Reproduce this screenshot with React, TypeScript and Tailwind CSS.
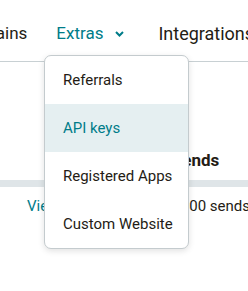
import React from 'react';

const menuItems = ['Referrals', 'API keys', 'Registered Apps', 'Custom Website'];

const App = () => {
  const active = 'API keys';

  return (
    <div className="relative w-[248px] h-[291px] overflow-hidden bg-white text-[#241c15]" style={{ fontFamily: 'Roboto, "Liberation Sans", sans-serif' }}>
      {/* top nav */}
      <div className="flex items-center h-[62px] pt-[6px] border-b border-[#c8d0d3] whitespace-nowrap text-[17px]">
        <span className="-ml-[40px]">Domains</span>
        <span className="ml-[29px] flex items-center text-[#007c89]">
          Extras
          <svg className="ml-[12px]" width="9" height="6" viewBox="0 0 9 6" fill="none">
            <path d="M1 1l3.5 3.5L8 1" stroke="#007c89" strokeWidth="2" />
          </svg>
        </span>
        <span className="ml-[34px] text-[18px]">Integrations</span>
      </div>

      {/* page content behind the menu */}
      <div className="pt-[85px]">
        <h2 className="pl-[107px] font-bold text-[17px] leading-[26px] whitespace-nowrap">Monthly sends</h2>
        <div className="mt-[7px] h-[7px] bg-[#dfe5e8]"></div>
        <div className="flex justify-between whitespace-nowrap text-[15px] mt-[8px] pl-[27px]">
          <span className="text-[#007c89]">View plan</span>
          <span className="-mr-[2px]">of 500,000 sends</span>
        </div>
      </div>

      {/* dropdown */}
      <div className="absolute left-[44px] top-[55px] w-[145px] bg-white border border-[#c4cbce] rounded-[7px] shadow-[0_2px_6px_rgba(0,0,0,0.12)] overflow-hidden">
        {menuItems.map((item) => (
          <div
            key={item}
            className={`h-[48px] flex items-center pl-[18px] text-[15px] ${item === active ? 'bg-[#e5eff1] text-[#007c89]' : ''}`}
          >
            {item}
          </div>
        ))}
      </div>
    </div>
  );
};

export default App;
